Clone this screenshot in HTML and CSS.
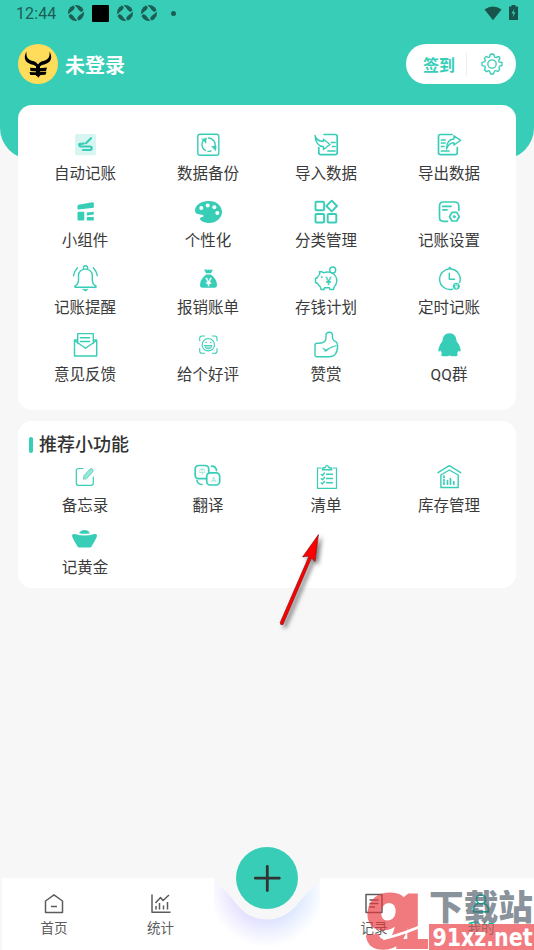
FILE: index.html
```html
<!DOCTYPE html>
<html lang="zh-CN">
<head>
<meta charset="utf-8">
<title>我的</title>
<link rel="stylesheet" href="styles.css">
</head>
<body>
<svg class="defs" width="0" height="0">
  <symbol id="aperture" viewBox="0 0 16 16"><circle cx="8" cy="8" r="8" fill="#1b5e54"/><path d="M8 3.300Q9.500 6.500 12.700 8Q9.500 9.500 8 12.700Q6.500 9.500 3.300 8Q6.500 6.500 8 3.300Z" fill="#38cdb7" stroke="#38cdb7" stroke-width="2.400" stroke-linejoin="round"/><path d="M8 3 5.500-.5M13 8 16.500 5.500M8 13 10.500 16.500M3 8-.5 10.500" stroke="#38cdb7" stroke-width="1.300"/></symbol>
</svg>
<div class="screen">
  <header class="header">
    <div class="status">
      <span class="time">12:44</span>
      <svg class="ap" width="16" height="16"><use href="#aperture"/></svg>
      <span class="square"></span>
      <svg class="ap" width="16" height="16"><use href="#aperture"/></svg>
      <svg class="ap" width="16" height="16"><use href="#aperture"/></svg>
      <span class="dot"></span>
      <svg class="wifi" width="18" height="15" viewBox="0 0 18 15"><path d="M.5 3.500Q9-2.500 17.500 3.500L9 14.300Z" fill="#17554c"/></svg>
      <svg class="battery" width="9" height="15" viewBox="0 0 9 15"><path d="M2.500 0h4v1.500H9V15H0V1.500h2.500Z" fill="#17554c"/><path d="M5.500 3.500 2.500 8.500h2L3.500 12.500 6.500 7.300h-2Z" fill="#38cdb7"/></svg>
    </div>
    <div class="profile">
      <svg class="avatar" width="40" height="40" viewBox="0 0 40 40"><circle cx="20" cy="20" r="20" fill="#ffdd5b"/><path d="M8.500 7.500C5 13.500 6.500 19.500 16 21L19.500 23.500h1L24 21C33.500 19.500 35 13.500 31.500 7.500C32 13 30.500 16 24 17.300Q21.500 18 20 20.500Q18.500 18 16 17.300C9.500 16 8 13 8.500 7.500Z"/><path d="M12 23.800q8 1 17-.2l-1 3.500q-8 .8-15.500-.1ZM11.500 28q8.500.6 17-.2l-1 3-5 .3-2.200 2.600-2-2.600-6-.2Z"/><path d="M20 21v11" stroke="#000" stroke-width="4"/></svg>
      <span class="name">未登录</span>
      <div class="pill">
        <span>签到</span><i></i>
        <svg width="22" height="22" viewBox="0 0 22 22" fill="none" stroke="#38cdb7" stroke-width="1.300" stroke-linejoin="round"><path d="M11 1 13 1.500 13.500 4Q15 5.200 16 4L18 3.500 19 5.500Q17 7.500 18 8.800L21 9.500V12.500L18.500 13.200Q17.300 14.500 18.700 16.500L16.800 18.500Q14.500 17 13.600 18L12.500 21H9.500L8.700 18.300Q7.500 17 5.400 18.700L3.400 16.700Q5 14.400 3.800 13.300L1 12.500V9.500L3.800 8.600Q5 7.400 3.300 5.400L5.300 3.400Q7.500 5 8.700 4L9.200 1.500Z"/><circle cx="11" cy="11" r="4.200"/></svg>
      </div>
    </div>
  </header>

  <main class="content">
    <section class="card tools">
      <div class="item"><svg viewBox="0 0 28 28"><rect x="4" y="3" width="21" height="21.300" rx="2" class="pale"/><path stroke-width="2.200" d="M15 12.200 20 7.200M12.700 12.500C10 13.500 8 12 8.200 14Q8.500 15.600 11 15.500H19C21.500 15.500 21 19 19 19H12"/></svg><span>自动记账</span></div>
      <div class="item"><svg viewBox="0 0 28 28"><rect x="3.800" y="3.200" width="21" height="21" rx="2.200"/><path d="M12.200 7.300A6.800 6.800 0 0 0 11.500 19.500M14 20.400A6.800 6.800 0 0 0 17 19.800M17.500 7.800A6.800 6.800 0 0 1 20.500 17M17.500 7.800L14.500 7"/><path class="fill" d="M8 8h4v4ZM17.800 15.500l4.400-.5-.5 4.500Z"/></svg><span>数据备份</span></div>
      <div class="item"><svg viewBox="0 0 28 28"><path stroke-width="1.700" d="M12 3.500H23Q25.200 3.500 25.200 5.500V21.500Q25.200 23.700 23 23.700H9Q6.800 23.700 6.800 21.500V16.500M19.500 11.500H23M20.500 15.500H23M16 20H23"/><path d="M3 4.500Q4 10 11.500 10.500V8.300L18 13.500 11.500 18.500V15.700Q4 15.500 3 4.500Z"/></svg><span>导入数据</span></div>
      <div class="item"><svg viewBox="0 0 28 28"><path stroke-width="1.700" d="M17 3.500H5.500Q3.500 3.500 3.500 5.500V21.500Q3.500 23.700 5.700 23.700H20Q22.300 23.700 22.300 21.500V16.500M6.500 9H10M6.500 12H10M6.500 15.500H9M6.500 20H14"/><path d="M11.500 18Q11.500 8.500 19 8V4.800L25.700 9.300 19 14V11.700Q14 11.500 11.500 18Z"/></svg><span>导出数据</span></div>

      <div class="item"><svg viewBox="0 0 28 28" class="solid"><path d="M6.500 8Q6.500 7 7.500 6.800L21.500 4.200Q22.800 4 22.800 5.200V9.700L7.500 11.500Q6.500 11.600 6.500 10.500Z"/><rect x="6.500" y="13.800" width="6.800" height="8.700" rx="1"/><path d="M15.800 14.500 22.800 13.700V16.500L15.800 17.500Z"/><rect x="15.800" y="19" width="7" height="3.500" rx=".5"/></svg><span>小组件</span></div>
      <div class="item"><svg viewBox="0 0 28 28" class="solid"><path d="M14 3C22 2.500 28 7.500 28 14C28 20 22 25 15.500 25C10 25 6 22.800 6 20.500C6 18.500 10.500 19.500 9.500 17.500C8.500 15.500 1 18 1 12.500C1 7 7.500 3 14 3Z"/><g fill="#fff"><circle cx="7.300" cy="10" r="2"/><circle cx="13.700" cy="7.600" r="2"/><circle cx="20.300" cy="9.300" r="2"/><circle cx="23.300" cy="15" r="2"/></g></svg><span>个性化</span></div>
      <div class="item"><svg viewBox="0 0 28 28" class="bold"><rect x="3.500" y="3.800" width="8.600" height="8.500" rx="1"/><rect x="3.500" y="16" width="8.600" height="8.500" rx="1"/><rect x="15.700" y="16" width="8.600" height="8.500" rx="1"/><path d="M19.700 2.700 25 8 19.700 13.300 14.400 8Z"/></svg><span>分类管理</span></div>
      <div class="item"><svg viewBox="0 0 28 28"><path stroke-width="1.700" d="M12.500 23.300H8.500Q4.500 23.300 4.500 19.500V8Q4.500 4 8.500 4H19.500Q23.800 4 23.800 8V12.500M7.800 8.400H16M7.800 11.800H12"/><path stroke-width="1.700" d="M17 14.300H21.800L24.300 18.700 21.800 23H17L14.500 18.700Z"/><circle class="fill" cx="19.300" cy="18.700" r="1.200"/></svg><span>记账设置</span></div>

      <div class="item"><svg viewBox="0 0 28 28"><path d="M4 21Q7.500 19.500 7.500 15V10.500C7.500 2 21.300 2 21.300 10.500V15Q21.300 19.500 25 21V22.200H4ZM12.500 3.800C11.500-.2 17.500-.2 16.500 3.800M6.500 2.700Q3.300 6 2.500 10.700M22.300 2.700Q25.500 6 26.300 10.700"/><path class="fill" d="M11.800 24.300h5.200q-2.500 3.500-5.200 0Z"/></svg><span>记账提醒</span></div>
      <div class="item"><svg viewBox="0 0 28 28" class="solid"><path d="M10 4.300Q12 5 14.500 4.500Q17 5 19 4.500L17 8.300H12ZM12 9.500H17Q23 14.500 23 20Q23 22.800 20.500 22.800H8.500Q6 22.800 6 20Q6 14.500 12 9.500Z"/><text x="14.500" y="20.500" font-size="11" fill="#fff" stroke="#fff" stroke-width=".3">¥</text></svg><span>报销账单</span></div>
      <div class="item"><svg viewBox="0 0 28 28"><path d="M7.500 6.500Q10 6.500 11.500 7.700Q17 6 21 8.500Q25 11.500 24.800 16Q24.500 20 22 22L21.500 24.500H18L17.500 22.800H12.500L12 24.500H9L8 21.300Q6.500 20.500 5.700 18.500L3.500 17.500V13.500L5.500 12.500Q6 10.500 7.700 9.500Z"/><circle cx="20.700" cy="5" r="3"/><circle class="fill" cx="9.700" cy="12" r=".6"/><text x="16.500" y="20" font-size="11" class="fill">¥</text></svg><span>存钱计划</span></div>
      <div class="item"><svg viewBox="0 0 28 28"><path d="M17.500 24.200A10.300 10.300 0 1 1 24.700 17.500M14.300 8.300V14.300H19.500"/><circle class="fill" cx="14.700" cy="3" r="1"/><circle class="fill" cx="21.300" cy="21.300" r="3.200"/><text x="21.300" y="23.800" font-size="6.500" fill="#fff" stroke="none">¥</text></svg><span>定时记账</span></div>

      <div class="item"><svg viewBox="0 0 28 28"><path d="M6.500 9H3.500V25H25.700V9H22.300M6.700 12.500V2.600H22.300V12.500M3.500 9.500 14.500 17.300 25.700 9.500M9.500 6.800H18.500M9.500 10.500H18.500"/></svg><span>意见反馈</span></div>
      <div class="item"><svg viewBox="0 0 28 28"><path stroke-width="1.100" d="M10.500 5H8Q5.700 5 5.700 7.300V9.800M18.300 5H20.800Q23 5 23 7.300V9.800M5.700 17.500V20Q5.700 22.300 8 22.300H10.500M23 17.500V20Q23 22.300 20.800 22.300H18.300"/><circle cx="14.300" cy="13.700" r="6.200" stroke-width="1.100"/><circle class="fill" cx="12" cy="11.500" r=".4"/><circle class="fill" cx="16.600" cy="11.500" r=".4"/><path class="pale2" d="M10.700 14.500H18Q17.500 18 14.300 18T10.700 14.500Z"/></svg><span>给个好评</span></div>
      <div class="item"><svg viewBox="0 0 28 28"><path d="M5 12.200Q14 12.500 14 7V4Q14 1.300 17.300 1.300T20.300 4.500Q20.500 8.500 22 9.700Q25.700 11 25.600 15Q25.500 25.800 17 25.800H5Q3 25.800 3 23.800V14.200Q3 12.200 5 12.200Z"/><path class="fill" d="M11 17 14 18.800Q19 15.500 24.700 14.500Q18 16.500 13.500 20.500Z"/></svg><span>赞赏</span></div>
      <div class="item"><svg viewBox="0 0 28 28" class="solid"><path d="M14.500 2.300C19 2.300 21.300 5.500 21.500 10Q25.500 15 25.700 20Q24.700 21 23.500 19.500Q23 21.500 22 22.300Q23.700 24 21.500 25.300H16.500L14.500 24.500 12.500 25.300H7.500Q5 24.500 7 22.300Q6 21 5.500 19.500Q4.300 21 3.300 20Q3.500 15 7.500 10C7.700 5.500 10 2.300 14.500 2.300Z"/></svg><span>QQ群</span></div>
    </section>

    <section class="card extras">
      <h2>推荐小功能</h2>
      <div class="grid">
        <div class="item"><svg viewBox="0 0 28 28"><path stroke-width="1.200" d="M12 5.500H7.500Q5.300 5.500 5.300 7.700V20Q5.300 22.300 7.500 22.300H20Q22.300 22.300 22.300 20V14"/><path class="pale2" d="M12.500 15.800 13 12.500 19 6.200Q20.300 5 21.500 6.200T21.500 9L15.700 15.500Z"/></svg><span>备忘录</span></div>
        <div class="item"><svg viewBox="0 0 28 28"><path stroke-width="1.700" d="M12.500 15.700H5Q1.200 15.700 1.200 12V6.200Q1.200 2.500 5 2.500H11Q14.700 2.500 14.700 6.200V9.500"/><rect x="12.700" y="9.800" width="13" height="12.200" rx="3.500" stroke-width="1.700"/><path stroke-width="1.700" d="M17.500 3.200Q22 3.200 22.500 7.700M3 17.300Q3.300 21.300 8 21.500"/><text x="8" y="11.200" font-size="6.500" class="faint">中</text><text x="19.500" y="18.500" font-size="7" class="faint">A</text></svg><span>翻译</span></div>
        <div class="item"><svg viewBox="0 0 28 28"><path stroke-width="1.200" d="M9 5H5.500V25.300H24.500V5H21"/><path d="M10.300 6.700 11 4.700H13Q15 0 17 4.700H19L19.800 6.700ZM14.500 11.300H20.500M14.500 15.500H20.500M14.500 19.700H20.500M9.300 11.500 10.500 12.500 12.500 10M9.300 15.700 10.500 16.700 12.500 14.300M9.300 19.900 10.500 20.900 12.500 18.500"/></svg><span>清单</span></div>
        <div class="item"><svg viewBox="0 0 28 28"><path d="M3 9.700 14.300 2.700 25.700 9.700M5.900 24.500V12L14.300 7 23.200 12V24.500Z"/><path stroke-width="1.700" d="M9 13V14.500M9 16.500V18M9 19.500V21.200M12.500 21.200V17.500M15.500 21.200V15.500M18.800 21.200V18.800"/></svg><span>库存管理</span></div>
        <div class="item"><svg viewBox="0 0 28 28" class="solid"><path d="M8 8.200Q10 5 13.500 5T19 8.200Q13.500 9.500 8 8.200ZM1 10.200Q2 8.500 4 9Q13.500 12 23 9Q25.500 8.500 26 10.200Q26.300 12 24 15.500L20.500 21.500Q20 22.500 19 22.500H8Q7 22.500 6.500 21.500L3 15.500Q.8 12 1 10.200Z"/></svg><span>记黄金</span></div>
      </div>
    </section>
  </main>

  <nav class="nav">
    <div class="tab"><svg viewBox="0 0 22 22"><path d="M2.500 8 11 1.800 19.500 8V19.500H2.500ZM8 13.500H14"/></svg><span>首页</span></div>
    <div class="tab"><svg viewBox="0 0 22 22"><path d="M2 1.500V19.300H20.500M6 13V16.500M9.500 10V16.500M13.500 12.500V16.500M17.500 9V16.500M5.500 10 10.500 4.500 13 7.500 19 2"/></svg><span>统计</span></div>
    <div class="notch"></div>
    <div class="tab"><svg viewBox="0 0 22 22"><path d="M3 1.500H19V19.500H3ZM6.500 7H15.500M6.500 10.500H15.500M6.500 14H12"/></svg><span>记录</span></div>
    <div class="tab active"><svg viewBox="0 0 22 22"><circle cx="11" cy="6.300" r="4.500"/><path d="M8.500 10.500Q3.500 12 3.500 17V18.800H18.500V17Q18.500 12 13.500 10.500"/></svg><span>我的</span></div>
  </nav>

  <svg class="fab" width="106" height="103" viewBox="0 0 106 103">
    <defs>
      <linearGradient id="hue"><stop offset="0" stop-color="#e2d8ff"/><stop offset=".5" stop-color="#dde0ff"/><stop offset="1" stop-color="#d3e6ff"/></linearGradient>
      <radialGradient id="fade" gradientUnits="userSpaceOnUse" cx="53" cy="42" r="58"><stop offset=".5" stop-color="#fff" stop-opacity="1"/><stop offset=".75" stop-color="#fff" stop-opacity=".45"/><stop offset="1" stop-color="#fff" stop-opacity="0"/></radialGradient>
      <mask id="glow"><rect width="106" height="103" fill="url(#fade)"/></mask>
    </defs>
    <rect y="31" width="106" height="72" fill="#fff"/>
    <rect y="31" width="106" height="72" fill="url(#hue)" mask="url(#glow)"/>
    <path d="M0 30H106V36Q99 39 92 47L86 54C77 66 67 72.500 53 72.500S29 66 20 54L14 47Q7 39 0 36Z" fill="#f7f7f7"/>
    <circle cx="53" cy="31" r="31" fill="#38cdb7"/>
    <path d="M53.300 19.500V43.500M41.300 31.200H65.300" stroke="#333" stroke-width="2.800" stroke-linecap="round"/>
  </svg>

  <svg class="arrow" width="60" height="110" viewBox="0 0 60 110"><path d="M45.500 4.500 29.500 27 36 26 7.200 92.500Q7 95.500 10 94.500L38.500 28 42 31.500Z" fill="#fc0000" stroke="#7b1010" stroke-width=".6"/></svg>

  <div class="watermark">
    <svg width="171" height="60" viewBox="0 0 171 60">
      <g opacity=".66">
        <text class="nine" transform="translate(-1 57.500) skewX(-6)" font-size="78" textLength="46" lengthAdjust="spacingAndGlyphs">9</text>
        <text class="nine" transform="translate(30 57.500)" font-size="78" textLength="36" lengthAdjust="spacingAndGlyphs">1</text>
      </g>
      <path d="M20 49Q44 43 65 33" stroke="#fff" stroke-width="2.500" fill="none"/>
      <text class="cn" x="66" y="30" font-size="35.500" textLength="104" lengthAdjust="spacingAndGlyphs">下载站</text>
      <rect x="66" y="34" width="105" height="26" fill="#eb373c" fill-opacity=".66"/>
      <text class="url" x="69.500" y="56" font-size="25" textLength="100" lengthAdjust="spacingAndGlyphs">91xz.net</text>
    </svg>
  </div>
</div>
</body>
</html>
```
FILE: styles.css
```css
* { box-sizing: border-box; }
body { margin: 0; font-family: Roboto, "Noto Sans CJK SC", sans-serif; color: #333; }
.defs { position: absolute; }
.screen { position: relative; width: 534px; height: 950px; overflow: hidden; background: #f7f7f7; display: flex; flex-direction: column; }

.header { height: 159px; flex: none; background: #38cdb7; border-radius: 0 0 31px 31px; }
.status { height: 28px; display: flex; align-items: center; padding: 0 16px; color: #1b5e54; }
.time { font-size: 16px; line-height: 28px; width: 52px; letter-spacing: .1px; }
.ap { margin-right: 8px; margin-top: -2px; }
.square { width: 17px; height: 17px; background: #000; border-radius: 1px; margin-right: 8px; margin-top: -1px; }
.dot { width: 5px; height: 5px; border-radius: 50%; background: #1b5e54; margin-left: 6px; margin-top: -1px; }
.wifi { margin-left: auto; margin-right: 7px; margin-top: -2px; }
.battery { margin-top: -3px; }
.profile { display: flex; align-items: center; height: 40px; margin-top: 16px; padding: 0 18px; }
.name { margin-left: 7px; font-size: 20px; font-weight: 700; color: #fff; }
.pill { margin-left: auto; width: 110px; height: 40px; border-radius: 20px; background: #fff; display: flex; align-items: center; padding-left: 17px; color: #38cdb7; font-size: 16px; font-weight: 700; }
.pill i { width: 1px; height: 23px; background: #eee; margin: 0 14px 0 11px; }

.content { margin-top: -54px; padding: 0 18px; flex: 1; display: flex; flex-direction: column; gap: 11px; }
.card { background: #fff; border-radius: 14px; }
.tools, .grid { display: grid; grid-template-columns: 122px 124px 112px 134px; padding-left: 6px; }
.tools { height: 305px; padding-top: 26px; grid-auto-rows: 66.8px; align-content: start; }
.extras { height: 167px; padding-top: 12px; }
.extras h2 { display: flex; align-items: center; margin: 0 0 6px 11px; height: 24px; font-size: 18px; line-height: 22px; font-weight: 500; gap: 6px; padding-bottom: 1px; }
.extras h2::before { content: ""; width: 4px; height: 16px; border-radius: 2px; background: #38cdb7; }
.grid { grid-auto-rows: 62px; }
.item { display: flex; flex-direction: column; align-items: center; font-size: 15.5px; line-height: 22px; color: #3a3a3a; }
.item svg { width: 28px; height: 28px; flex: none; margin-bottom: 4.4px; fill: none; stroke: #38cdb7; stroke-width: 1.4; stroke-linecap: round; stroke-linejoin: round; }
.extras .item svg { margin-bottom: 4px; }
.item svg.solid { fill: #38cdb7; stroke: none; }
.item svg.bold { stroke-width: 1.9; }
.item .fill { fill: #38cdb7; stroke: #38cdb7; stroke-width: .6; }
.item text { text-anchor: middle; font-family: Roboto, "Noto Sans CJK SC", sans-serif; }
.item text.fill { stroke-width: .3; }
.item text.faint { fill: #7fdccf; stroke: none; }
.item .pale { fill: #d7f5f1; stroke: none; }
.item .pale2 { fill: #9be6db; stroke-width: .8; }

.nav { height: 72px; flex: none; margin-left: 2px; background: #fff; display: grid; grid-template-columns: 104px 109px 105px 108px 106px; }
.tab { display: flex; flex-direction: column; align-items: center; padding-top: 15px; font-size: 13.5px; line-height: 20px; color: #5c5c5c; }
.tab svg { width: 22px; height: 22px; margin-bottom: 3px; fill: none; stroke: #5c5c5c; stroke-width: 1.5; stroke-linejoin: round; }
.tab.active { color: #00bfa0; }
.tab.active svg { stroke: #00bfa0; stroke-width: 1.8; }
.fab { position: absolute; left: 214px; top: 847px; }
.arrow { position: absolute; left: 273px; top: 530px; filter: drop-shadow(3px 3px 2px rgba(0,0,0,.5)); }

.watermark { position: absolute; left: 363px; top: 890px; width: 171px; height: 60px; }
.watermark svg { display: block; }
.nine { font-family: "Liberation Sans", sans-serif; font-weight: 700; fill: #eb373c; stroke: #eb373c; stroke-width: 2; }
.cn { font-family: "Noto Sans CJK SC", sans-serif; font-weight: 900; fill: #55636e; fill-opacity: .7; }
.url { font-family: "DejaVu Sans", sans-serif; font-weight: 700; fill: #fff; }
```
